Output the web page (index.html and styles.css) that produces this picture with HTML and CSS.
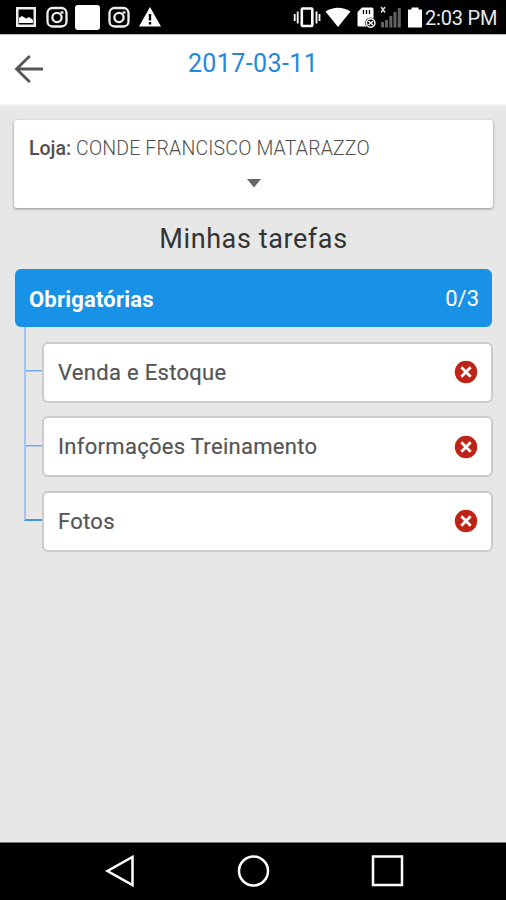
FILE: index.html
```html
<!DOCTYPE html>
<html lang="pt-BR">
<head>
<meta charset="utf-8">
<title>Minhas tarefas</title>
<link rel="stylesheet" href="styles.css">
</head>
<body>
<div class="status">
  <svg class="picture" width="20" height="34" viewBox="16 0 20 34"><path fill="#eee" fill-rule="evenodd" d="M16 7h20v20H16zM18.500 9.500h15v15h-15z"/><path fill="#fff" d="M19 23v-5l3-2 4 2.500 3-1.500 4 3v3z"/></svg>
  <svg class="insta" width="22" height="34" viewBox="46 0 22 34" fill="none" stroke="#eee" stroke-width="2.300"><rect x="47.500" y="8" width="19" height="18.500" rx="5"/><circle cx="57" cy="17.500" r="4.600"/><path d="M60.500 12.500h3"/></svg>
  <span class="square"></span>
  <svg class="insta" width="22" height="34" viewBox="46 0 22 34" fill="none" stroke="#eee" stroke-width="2.300"><rect x="47.500" y="8" width="19" height="18.500" rx="5"/><circle cx="57" cy="17.500" r="4.600"/><path d="M60.500 12.500h3"/></svg>
  <svg class="warning" width="22" height="34" viewBox="139 0 22 34"><path fill="#fff" d="M150 7l11 19.500h-22z"/><path stroke="#000" stroke-width="2.400" d="M150 14v6.500M150 22v2.400"/></svg>
  <svg class="vibrate" width="28" height="34" viewBox="293 0 28 34" fill="none" stroke="#fff"><rect x="301.800" y="8.500" width="10.500" height="17.500" rx="1" stroke-width="2.600"/><path stroke-width="1.800" d="M297.700 11.500v12M294.700 14v7M316.500 11.500v12M319.500 14v7"/></svg>
  <svg class="wifi" width="26" height="34" viewBox="325 0 26 34"><path fill="#fff" d="M325.500 11.500Q338 4 350.500 11.500L338 27z"/></svg>
  <svg class="sd" width="20" height="34" viewBox="357 0 20 34"><path fill="#fff" d="M362 7.500h10q1.500 0 1.500 1.500v17.500h-15q-1 0-1-1V12z"/><path stroke="#000" stroke-width="1.300" d="M363.500 10v4M366.500 10v4M369.500 10v4"/><circle cx="370.700" cy="23" r="5.500"/><g fill="none" stroke="#fff" stroke-width="1.500"><circle cx="370.700" cy="23" r="4.200"/><path d="M368.500 21l4.400 4M373 21l-4.500 4"/></g></svg>
  <svg class="signal" width="22" height="34" viewBox="380 0 22 34"><path stroke="#626262" stroke-width="3" d="M382.500 22v5.500M386.500 20v7.500M390.800 16v11.500M395 12v15.500M399.300 8v19.500"/><path stroke="#ddd" stroke-width="1.500" d="M381 7l4 5.500M385 7l-4 5.500"/></svg>
  <svg class="battery" width="14" height="34" viewBox="408 0 14 34"><path fill="#fff" d="M411.500 7.500h7v2h3.500v18h-14v-18h3.500z"/></svg>
  <span class="clock">2:03 PM</span>
</div>
<header class="bar">
  <svg class="back" width="30" height="30" viewBox="14 53 30 30" fill="none" stroke="#555"><path stroke-width="2.800" d="M43 69H16.500M29.800 56L16.500 69l13.300 13"/></svg>
  <h1 class="date">2017-03-11</h1>
</header>
<main class="content">
  <section class="store">
    <p class="store-name"><b>Loja:</b> CONDE FRANCISCO MATARAZZO</p>
    <svg class="caret" width="14" height="9" viewBox="0 0 14 9"><path fill="#666" d="M0 0h14L7 8.500z"/></svg>
  </section>
  <h2 class="title">Minhas tarefas</h2>
  <div class="group"><b class="group-name">Obrigatórias</b><span class="count">0/3</span></div>
  <ul class="tasks">
    <li class="task"><i class="branch"></i><div class="card"><span class="name">Venda e Estoque</span><svg width="24" height="24" viewBox="0 0 24 24"><circle cx="12" cy="12" r="11.200" fill="#be2318"/><path stroke="#fff" stroke-width="2.800" d="M7.300 7.300l9.400 9.400M16.700 7.300l-9.400 9.400"/></svg></div></li>
    <li class="task"><i class="branch"></i><div class="card"><span class="name">Informações Treinamento</span><svg width="24" height="24" viewBox="0 0 24 24"><circle cx="12" cy="12" r="11.200" fill="#be2318"/><path stroke="#fff" stroke-width="2.800" d="M7.300 7.300l9.400 9.400M16.700 7.300l-9.400 9.400"/></svg></div></li>
    <li class="task"><i class="branch last"></i><div class="card"><span class="name">Fotos</span><svg width="24" height="24" viewBox="0 0 24 24"><circle cx="12" cy="12" r="11.200" fill="#be2318"/><path stroke="#fff" stroke-width="2.800" d="M7.300 7.300l9.400 9.400M16.700 7.300l-9.400 9.400"/></svg></div></li>
  </ul>
</main>
<nav class="nav">
  <svg width="32" height="34" viewBox="104 855 32 34"><path d="M132.500 857v28L107.500 871z"/></svg>
  <svg width="34" height="34" viewBox="236 855 34 34"><circle cx="253.500" cy="871" r="14.500"/></svg>
  <svg width="34" height="34" viewBox="370 855 34 34"><rect x="373" y="856.500" width="29" height="28.500"/></svg>
</nav>
</body>
</html>
```
FILE: styles.css
```css
* { box-sizing: border-box; }
body { margin: 0; height: 900px; display: flex; flex-direction: column; overflow: hidden; background: #e7e7e7; color: #555; font-family: Roboto, sans-serif; }
h1, h2, p, ul { margin: 0; padding: 0; }
svg { display: block; flex: none; }
.status { height: 34px; flex: none; display: flex; align-items: center; padding-left: 16px; background: #000; }
.insta { margin-left: 10px; }
.square { width: 25px; height: 25px; margin: 1px -2px 0 7px; flex: none; border-radius: 3px; background: #fff; }
.warning { margin-left: 9px; }
.vibrate { margin-left: 132px; }
.wifi { margin-left: 4px; }
.sd { margin-left: 6px; }
.signal { margin-left: 3px; }
.battery { margin-left: 6px; }
.clock { margin: 2px 0 0 3px; color: #e8e8e8; font-size: 20px; line-height: 24px; letter-spacing: -.2px; white-space: nowrap; }
.bar { height: 72px; flex: none; display: grid; grid-template-columns: 44px 1fr 44px; align-items: start; border-top: 1px solid #bbb; border-bottom: 2px solid #f1f1f1; background: #fff; }
.back { margin: 18px 0 0 14px; }
.date { padding-top: 14px; color: #2388da; font-size: 25px; line-height: 30px; font-weight: 400; letter-spacing: .4px; text-align: center; }
.content { flex: 1; padding: 14px 13px 0 14px; }
.store { height: 88px; padding: 16px 15px 0; border-radius: 3px; background: #fff; box-shadow: 0 1px 3px rgba(0,0,0,.4); }
.store-name { color: #505050; font-size: 19.5px; line-height: 26px; font-weight: 300; letter-spacing: .16px; white-space: nowrap; }
.store-name b { font-weight: 500; letter-spacing: 0; }
.caret { margin: 17px auto 0; }
.title { margin-top: 14px; color: #333; font-size: 27px; line-height: 34px; font-weight: 400; letter-spacing: .6px; text-align: center; }
.group { height: 58px; margin: 13px 1px 0; padding: 0 13px 0 14px; display: flex; align-items: center; justify-content: space-between; border-radius: 6px; background: #1792e6; color: #fff; font-size: 22px; }
.group-name { padding-top: 2px; font-weight: 700; letter-spacing: .2px; }
.tasks { margin: 0 0 0 10px; list-style: none; }
.task { height: 74.500px; display: flex; }
.branch { width: 18px; flex: none; border-left: 2px solid #a5c4ef; background: linear-gradient(#6faae9, #6faae9) 0 43px / 100% 1.500px no-repeat; }
.last { height: 44.500px; border-bottom: 2px solid #4399df; background: none; }
.card { flex: 1; height: 61px; margin-top: 14.500px; padding: 0 13px 0 14px; display: flex; align-items: center; justify-content: space-between; border: 2px solid #cbcbcb; border-radius: 6px; background: #fff; color: #555; font-size: 22px; line-height: 30px; }
.name { padding-top: 1px; letter-spacing: .3px; -webkit-text-stroke: .2px #555; }
.nav { height: 58px; flex: none; display: flex; justify-content: space-between; padding: 12px 102px 0 104px; border-top: 1px solid #777; background: #000; }
.nav svg { fill: none; stroke: #fff; stroke-width: 2.500; }
```
